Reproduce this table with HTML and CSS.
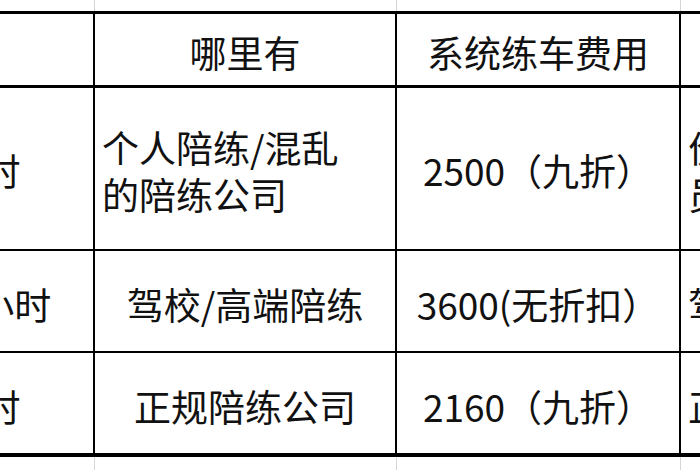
FILE: index.html
```html
<!DOCTYPE html>
<html lang="zh">
<head>
<meta charset="utf-8">
<title>陪练费用对比</title>
<link rel="stylesheet" href="styles.css">
</head>
<body>
<table class="sheet">
  <colgroup>
    <col class="c-hours">
    <col class="c-where">
    <col class="c-fee">
    <col class="c-note">
  </colgroup>
  <tr class="ghost ghost-top"><td></td><td></td><td></td><td></td></tr>
  <tr class="head">
    <td class="cell">课时</td>
    <td class="cell">哪里有</td>
    <td class="cell">系统练车费用</td>
    <td class="cell">优缺点</td>
  </tr>
  <tr class="row row-tall">
    <td class="cell">24小时</td>
    <td class="cell left">个人陪练/混乱<br>的陪练公司</td>
    <td class="cell">2500（九折）</td>
    <td class="cell left">价格便宜但服务人<br>员不够专业</td>
  </tr>
  <tr class="row">
    <td class="cell">40~50小时</td>
    <td class="cell">驾校/高端陪练</td>
    <td class="cell">3600(无折扣）</td>
    <td class="cell left">驾校教练专业</td>
  </tr>
  <tr class="row row-last">
    <td class="cell">24小时</td>
    <td class="cell">正规陪练公司</td>
    <td class="cell">2160（九折）</td>
    <td class="cell left">正规流程教学</td>
  </tr>
  <tr class="ghost ghost-bottom"><td></td><td></td><td></td><td></td></tr>
</table>
</body>
</html>
```

FILE: styles.css
```css
html, body {
  margin: 0;
  padding: 0;
  background: #ffffff;
  overflow: hidden;
}

body {
  width: 700px;
  height: 470px;
}

.sheet {
  border-collapse: collapse;
  table-layout: fixed;
  width: 1150px;
  margin-left: -169px;
  font-family: "Noto Sans CJK SC", "Noto Sans CJK JP", sans-serif;
  font-size: 37px;
  color: #111111;
}

.c-hours { width: 262px; }
.c-where { width: 302px; }
.c-fee { width: 284px; }
.c-note { width: 302px; }

.ghost td {
  padding: 0;
  border-left: 1px solid #d6d6d6;
  border-right: 1px solid #d6d6d6;
}

.ghost-top td { height: 11px; }
.ghost-bottom td { height: 14px; }

.cell {
  padding: 6px 7px 0 7px;
  text-align: center;
  vertical-align: middle;
  white-space: nowrap;
  line-height: 47px;
  border-left: 2px solid #000000;
  border-right: 2px solid #000000;
  border-top: 2px solid #000000;
  border-bottom: 2px solid #000000;
}

.left { text-align: left; }

.head .cell {
  height: 65px;
  border-top: 3px solid #000000;
  border-bottom: 3px solid #000000;
}

.row .cell { height: 94px; }

.row-tall .cell {
  height: 157px;
  padding-top: 4px;
}

.row-last .cell {
  border-bottom: 4px solid #000000;
}
```
